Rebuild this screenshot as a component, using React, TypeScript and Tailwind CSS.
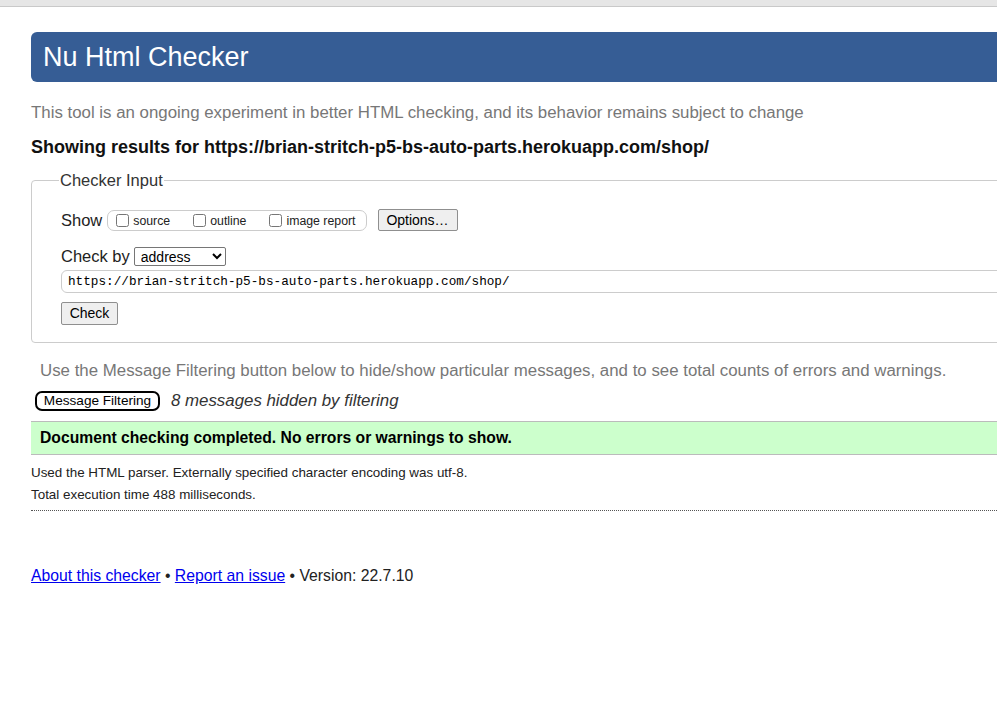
export default function App() {
  return (
    <div className="h-[710px] w-[997px] overflow-hidden bg-white font-['Liberation_Sans',Arial,sans-serif] text-[#222]">
      <div className="h-[7px] border-b border-[#c9c9c9] bg-[#e6e6e6]" />
      <div className="ml-[31px] w-[1100px] pt-[25px]">
        <h1 className="flex h-[50px] items-center rounded-l-[6px] bg-[#365d95] pl-[12px] text-[27px] text-white">
          Nu Html Checker
        </h1>
        <p className="mt-[21px] text-[16.85px] leading-[20px] text-[#777]">
          This tool is an ongoing experiment in better HTML checking, and its behavior remains subject to change
        </p>
        <p className="mt-[13px] text-[18px] font-bold leading-[22px] text-[#111]">
          Showing results for https://brian-stritch-p5-bs-auto-parts.herokuapp.com/shop/
        </p>

        <fieldset className="mt-[12px] rounded-[4px] border border-[#ccc] px-[29px] pb-[17px] pt-[19px]">
          <legend className="ml-[-2px] px-[1px] text-[16.5px] leading-[20px] text-[#333]">Checker Input</legend>
          <div className="flex h-[22px] items-center">
            <span className="text-[16.5px] leading-[22px]">Show</span>
            <div className="ml-[5px] flex h-[21px] items-center rounded-[7px] border border-[#ccc] pl-[8px] pr-[10px] text-[12.3px]">
              <label className="flex items-center">
                <input type="checkbox" className="m-0 h-[13px] w-[13px]" />
                <span className="ml-[4px] mt-[3px]">source</span>
              </label>
              <label className="ml-[23px] flex items-center">
                <input type="checkbox" className="m-0 h-[13px] w-[13px]" />
                <span className="ml-[4px] mt-[3px]">outline</span>
              </label>
              <label className="ml-[23px] flex items-center">
                <input type="checkbox" className="m-0 h-[13px] w-[13px]" />
                <span className="ml-[4px] mt-[3px]">image report</span>
              </label>
            </div>
            <button className="ml-[11px] h-[22px] w-[80px] rounded-[2px] border border-[#8f8f8f] bg-[#efefef] text-[14px] text-black">
              Options…
            </button>
          </div>
          <div className="mt-[15px] flex h-[20px] items-center">
            <span className="text-[16.5px] leading-[20px]">Check by</span>
            <select className="ml-[4px] h-[19px] w-[92px] rounded-[2px] border border-[#767676] bg-white pl-[2px] text-[14px] text-black">
              <option>address</option>
            </select>
          </div>
          <div className="mt-[4px] flex h-[23px] items-center rounded-l-[6px] border border-[#ccc] pl-[6px] font-['Liberation_Mono',monospace] text-[12.7px] text-black">
            https://brian-stritch-p5-bs-auto-parts.herokuapp.com/shop/
          </div>
          <button className="mt-[9px] block h-[23px] w-[57px] rounded-[2px] border border-[#8f8f8f] bg-[#efefef] text-[14px] text-black">
            Check
          </button>
        </fieldset>

        <p className="ml-[9px] mt-[18px] text-[16.85px] leading-[20px] text-[#777]">
          Use the Message Filtering button below to hide/show particular messages, and to see total counts of errors and warnings.
        </p>
        <div className="mt-[10px] flex h-[20px] items-center">
          <button className="ml-[4px] h-[20px] w-[125px] rounded-[7px] border-2 border-black bg-white text-center text-[13.6px] leading-none text-black">
            Message Filtering
          </button>
          <span className="ml-[11px] text-[16.85px] italic leading-[20px] text-[#333]">8 messages hidden by filtering</span>
        </div>
        <div className="mt-[10px] flex h-[34px] items-center border-y border-[#bbb] bg-[#ccffcc] pl-[9px] text-[15.7px] font-bold text-black">
          Document checking completed. No errors or warnings to show.
        </div>
        <p className="mt-[10px] text-[13.4px] leading-[16px] text-[#222]">
          Used the HTML parser. Externally specified character encoding was utf-8.
        </p>
        <p className="mt-[6px] text-[13.4px] leading-[16px] text-[#222]">Total execution time 488 milliseconds.</p>
        <div className="mt-[7px] border-b border-dotted border-[#555]" />

        <p className="mt-[55px] text-[15.75px] leading-[20px] text-[#222]">
          <a href="#" className="text-[#0000ee] underline">About this checker</a>
          {" • "}
          <a href="#" className="text-[#0000ee] underline">Report an issue</a>
          {" • Version: 22.7.10"}
        </p>
      </div>
    </div>
  );
}
